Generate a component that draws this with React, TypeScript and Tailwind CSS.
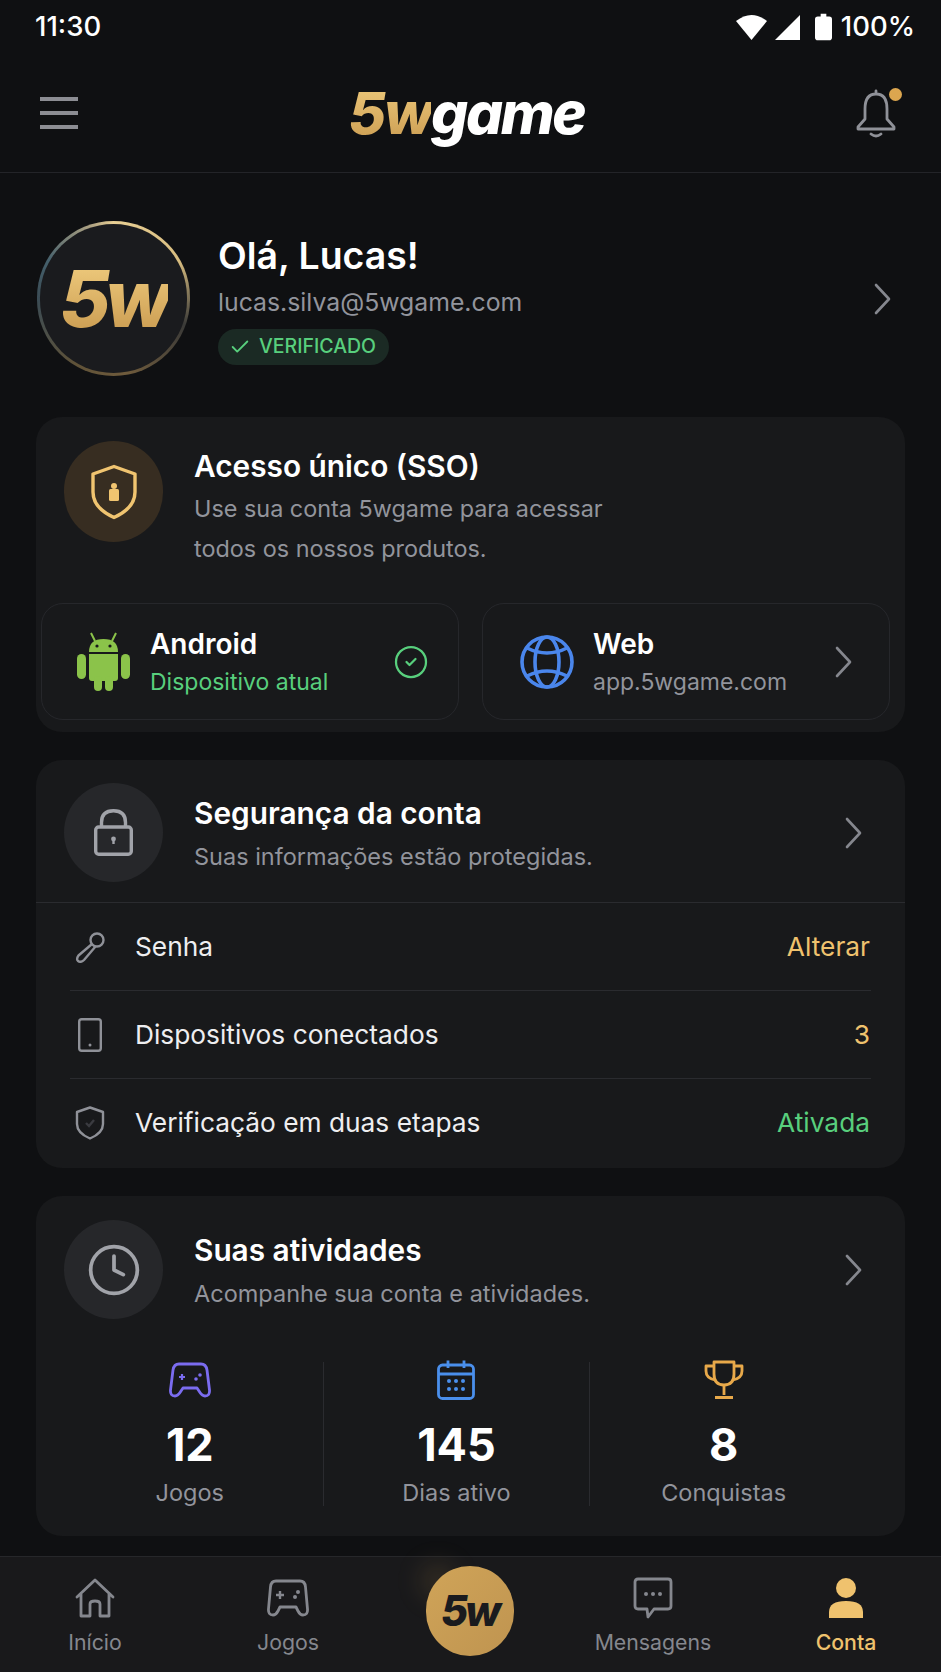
import type { ReactNode } from 'react';
import { Check, CircleCheck, Clock } from 'lucide-react';

const gold = 'bg-linear-to-b from-[#f0cc7e] to-[#c99a4f] bg-clip-text text-transparent';

function Chevron() {
  return (
    <svg viewBox="0 0 17 32" className="h-[32px] w-[17px] shrink-0" fill="none" stroke="#85878e" strokeWidth="2.6" strokeLinecap="round" strokeLinejoin="round">
      <path d="M2 2 L15 16 L2 30" />
    </svg>
  );
}

function SoftIconCircle({ children, warm }: { children: ReactNode; warm?: boolean }) {
  return (
    <div
      className={`flex w-[99px] shrink-0 items-center justify-center rounded-full ${
        warm ? 'h-[101px] bg-[#372d21]' : 'h-[99px] bg-[#26272a]'
      }`}
    >
      {children}
    </div>
  );
}

function CardHeader({ icon, title, sub }: { icon: ReactNode; title: string; sub: string }) {
  return (
    <div className="flex items-center pr-[43px] pl-[28px]">
      <SoftIconCircle>{icon}</SoftIconCircle>
      <div className="ml-[31px] flex-1 pt-[2px]">
        <div className="text-[29.8px] leading-[36px] font-semibold text-white">{title}</div>
        <div className="mt-[10px] text-[23.5px] leading-[32px] text-[#92949c]">{sub}</div>
      </div>
      <Chevron />
    </div>
  );
}

function KeyIcon() {
  return (
    <svg viewBox="0 0 32 32" className="h-[32px] w-[32px]" fill="none" stroke="#8f9198" strokeWidth="2.4" strokeLinejoin="round">
      <circle cx="23" cy="9" r="6.5" />
      <path d="M18 13 L4.5 24.5 Q2 28 4 30 Q7 32 10 29 L21.5 15.5" />
    </svg>
  );
}

function TabletIcon() {
  return (
    <svg viewBox="0 0 24 34" className="h-[34px] w-[24px]" fill="none" stroke="#8f9198" strokeWidth="2.4">
      <rect x="1.2" y="1.2" width="21.6" height="31.6" rx="2.5" />
      <circle cx="12" cy="27" r="1.5" fill="#8f9198" stroke="none" />
    </svg>
  );
}

function ShieldIcon() {
  return (
    <svg viewBox="0 0 30 34" className="h-[34px] w-[30px]" fill="none" stroke="#8f9198" strokeWidth="2.4">
      <path d="M15 1.5 L28 6 V18 Q28 27 15 32.5 Q2 27 2 18 V6 Z" strokeLinejoin="round" />
      <path d="M11 17 L14 20 L19 14" stroke="#3a3b40" />
    </svg>
  );
}

function SecurityRow({ icon, label, value, color, last }: { icon: ReactNode; label: string; value: string; color: string; last?: boolean }) {
  return (
    <div className={`flex h-[88px] items-center ${last ? '' : 'border-b border-[#2a2b2f]'}`}>
      <div className="flex w-[40px] justify-center">{icon}</div>
      <span className="ml-[25px] flex-1 text-[26.3px] text-[#eeeef0]">{label}</span>
      <span className={`mr-[1px] text-[26.3px] ${color}`}>{value}</span>
    </div>
  );
}

function Stat({ icon, value, label, divider }: { icon: ReactNode; value: string; label: string; divider?: boolean }) {
  return (
    <div className={`flex h-[144px] flex-col items-center ${divider ? 'border-r border-[#2a2b2f]' : ''}`}>
      <div className="-mt-[2px] flex h-[40px] shrink-0 items-center">{icon}</div>
      <div className="mt-[18px] shrink-0 text-[45px] leading-[54px] font-bold text-white">{value}</div>
      <div className="mt-[5px] shrink-0 text-[23.5px] leading-[32px] text-[#92949c]">{label}</div>
    </div>
  );
}

function NavItem({ icon, label, width, active }: { icon: ReactNode; label: string; width: string; active?: boolean }) {
  return (
    <div className={`flex flex-col items-center ${width}`}>
      <div className="flex h-[42px] items-center">{icon}</div>
      <span className={`mt-[8px] text-[21.3px] leading-[30px] ${active ? 'font-medium text-[#efc26e]' : 'text-[#85878e]'}`}>{label}</span>
    </div>
  );
}

export default function App() {
  return (
    <div className="flex h-[1672px] w-[941px] flex-col overflow-hidden bg-[#0f1012] font-['Inter',sans-serif]">
      {/* Status bar */}
      <div className="flex h-[54px] shrink-0 items-center justify-between pr-[26px] pl-[35px] text-[27.5px] font-medium text-white">
        <span>11:30</span>
        <div className="flex items-center">
          <svg viewBox="0 0 31 26" className="h-[26px] w-[31px]" fill="white">
            <path d="M0 7 Q15.5 -5 31 7 L15.5 26 Z" />
          </svg>
          <svg viewBox="0 0 26 26" className="ml-[8px] h-[25px] w-[25px]" fill="white">
            <path d="M26 0 V26 H0 Z" />
          </svg>
          <svg viewBox="0 0 18 28" className="ml-[15px] h-[28px] w-[17px]" fill="white">
            <path d="M6 0 H12 V3 H15 Q18 3 18 6 V25 Q18 28 15 28 H3 Q0 28 0 25 V6 Q0 3 3 3 H6 Z" />
          </svg>
          <span className="ml-[9px]">100%</span>
        </div>
      </div>

      {/* Top bar */}
      <div className="flex h-[119px] shrink-0 items-center justify-between border-b border-[#232428] pr-[42px] pl-[40px]">
        <div className="flex w-[38px] flex-col gap-[10px]">
          <div className="h-[4px] bg-[#8c8d93]" />
          <div className="h-[4px] bg-[#8c8d93]" />
          <div className="h-[4px] bg-[#8c8d93]" />
        </div>
        <div className="text-[58px] leading-[70px] font-extrabold tracking-[-2.2px] italic">
          <span className={gold}>5w</span>
          <span className="text-white">game</span>
        </div>
        <div className="relative h-[50px] w-[44px]">
          <svg viewBox="0 0 44 50" className="h-[50px] w-[44px]" fill="none" stroke="#8f9198" strokeWidth="2.8" strokeLinejoin="round" strokeLinecap="round">
            <path d="M21 3 V6 M21 6 C12 6 10 14 10 21 V31 L3 39 V41 H39 V39 L32 31 V21 C32 14 30 6 21 6 Z" />
            <path d="M16 46 Q21 50 26 46" />
          </svg>
          <div className="absolute top-[0px] right-[-3px] h-[13px] w-[13px] rounded-full bg-[#dca64f]" />
        </div>
      </div>

      {/* Profile */}
      <div className="flex shrink-0 items-center pt-[48px] pr-[50px] pb-[41px] pl-[37px]">
        <div className="h-[155px] w-[153px] shrink-0 rounded-full bg-[conic-gradient(from_0deg,#e8cf94_0deg,#d8bd80_60deg,#3a3a38_110deg,#6f5b3c_170deg,#5f5238_210deg,#3b4c55_270deg,#45606c_300deg,#b4a684_345deg,#e8cf94_360deg)] p-[3px]">
          <div className="flex h-full w-full items-center justify-center rounded-full bg-[#1a1b1e]">
            <span className={`text-[78px] leading-none font-extrabold tracking-[-5px] italic ${gold}`}>5w</span>
          </div>
        </div>
        <div className="ml-[28px] flex-1 self-start pt-[13px]">
          <div className="text-[37.4px] leading-[44px] font-semibold text-white">Olá, Lucas!</div>
          <div className="mt-[7px] text-[24.8px] leading-[34px] text-[#92949c]">lucas.silva@5wgame.com</div>
          <div className="mt-[10px] flex h-[36px] w-[171px] items-center gap-[8px] rounded-full bg-[#1b2a24] pl-[11px] text-[19.5px] font-medium text-[#58cf7d]">
            <Check className="h-[22px] w-[22px]" strokeWidth={2} />
            VERIFICADO
          </div>
        </div>
        <Chevron />
      </div>

      <div className="flex flex-col gap-[28px] px-[36px]">
        {/* SSO */}
        <div className="h-[315px] rounded-[26px] bg-[#18191b] pt-[24px]">
          <div className="flex pl-[28px]">
            <SoftIconCircle warm>
              <svg viewBox="0 0 48 56" className="h-[56px] w-[48px]" fill="none" stroke="#f0c470" strokeWidth="3.4" strokeLinejoin="round">
                <path d="M24 2.5 L45 10 V28 Q45 44 24 53.5 Q3 44 3 28 V10 Z" />
                <circle cx="24" cy="22" r="3" fill="#f0c470" stroke="none" />
                <rect x="19" y="25" width="10" height="12" rx="1.5" fill="#f0c470" stroke="none" />
              </svg>
            </SoftIconCircle>
            <div className="ml-[31px] pt-[7px]">
              <div className="text-[29.8px] leading-[36px] font-semibold text-white">Acesso único (SSO)</div>
              <div className="mt-[5px] text-[23.4px] leading-[40px] text-[#92949c]">
                Use sua conta 5wgame para acessar
                <br />
                todos os nossos produtos.
              </div>
            </div>
          </div>
          <div className="mt-[34px] flex gap-[23px] pr-[15px] pl-[5px]">
            <div className="flex h-[117px] w-[418px] items-center rounded-[22px] border border-[#26272b] pr-[29px] pl-[35px]">
              <svg viewBox="0 0 53 59" className="h-[59px] w-[53px] shrink-0" fill="#8bc34a">
                <path d="M14 1 L18 9 M39 1 L35 9" stroke="#8bc34a" strokeWidth="2" />
                <path d="M12 20 Q12 7 26.5 7 Q41 7 41 20 Z" />
                <rect x="0" y="22" width="9" height="25" rx="4.5" />
                <rect x="44" y="22" width="9" height="25" rx="4.5" />
                <path d="M12 22 H41 V46 Q41 49 38 49 H15 Q12 49 12 46 Z" />
                <rect x="17" y="44" width="8" height="15" rx="4" />
                <rect x="28" y="44" width="8" height="15" rx="4" />
                <circle cx="20" cy="14" r="1.6" fill="#18191b" />
                <circle cx="33" cy="14" r="1.6" fill="#18191b" />
              </svg>
              <div className="ml-[20px] flex-1">
                <div className="text-[28px] leading-[36px] font-semibold text-white">Android</div>
                <div className="mt-[4px] text-[23px] leading-[32px] text-[#58cf7d]">Dispositivo atual</div>
              </div>
              <CircleCheck className="h-[36px] w-[36px] text-[#58cf7d]" strokeWidth={1.5} />
            </div>
            <div className="flex h-[117px] flex-1 items-center rounded-[22px] border border-[#26272b] pr-[37px] pl-[37px]">
              <svg viewBox="0 0 54 54" className="h-[54px] w-[54px] shrink-0" fill="none" stroke="#4a86ec" strokeWidth="3.6">
                <circle cx="27" cy="27" r="25" />
                <ellipse cx="27" cy="27" rx="12" ry="25" />
                <path d="M7 13 Q27 23 47 13 M7 41 Q27 31 47 41" />
              </svg>
              <div className="ml-[19px] flex-1">
                <div className="text-[28px] leading-[36px] font-semibold text-white">Web</div>
                <div className="mt-[4px] text-[23px] leading-[32px] text-[#92949c]">app.5wgame.com</div>
              </div>
              <Chevron />
            </div>
          </div>
        </div>

        {/* Account security */}
        <div className="h-[408px] rounded-[26px] bg-[#18191b] pt-[23px]">
          <CardHeader
            icon={
              <svg viewBox="0 0 39 47" className="h-[47px] w-[39px]" fill="none" stroke="#a1a3a9" strokeWidth="3.4">
                <rect x="1.7" y="18" width="35.6" height="27.3" rx="3" />
                <path d="M7.5 18 V13.5 C7.5 5.5 12 1.7 19.5 1.7 C27 1.7 31.5 5.5 31.5 13.5 V18" />
                <circle cx="19.5" cy="30" r="2.4" fill="#a1a3a9" stroke="none" />
                <path d="M19.5 30 V35" strokeWidth="2.4" />
              </svg>
            }
            title="Segurança da conta"
            sub="Suas informações estão protegidas."
          />
          <div className="mt-[20px] border-t border-[#2a2b2f] pr-[34px] pl-[34px]">
            <SecurityRow icon={<KeyIcon />} label="Senha" value="Alterar" color="text-[#efc26e]" />
            <SecurityRow icon={<TabletIcon />} label="Dispositivos conectados" value="3" color="text-[#efc26e]" />
            <SecurityRow icon={<ShieldIcon />} label="Verificação em duas etapas" value="Ativada" color="text-[#58cf7d]" last />
          </div>
        </div>

        {/* Activity */}
        <div className="h-[340px] rounded-[26px] bg-[#18191b] pt-[24px]">
          <CardHeader
            icon={<Clock className="h-[56px] w-[56px] text-[#a1a3a9]" strokeWidth={1.6} />}
            title="Suas atividades"
            sub="Acompanhe sua conta e atividades."
          />
          <div className="mt-[43px] ml-[21px] grid w-[800px] grid-cols-3">
            <Stat
              divider
              value="12"
              label="Jogos"
              icon={
                <svg viewBox="0 0 42 36" className="h-[36px] w-[42px]" fill="none" stroke="#7b6cf0" strokeWidth="2.8" strokeLinejoin="round">
                  <path d="M10 2 H32 Q37 2 38 8 L40.5 28 Q41 34 36 34 Q33 34 30 29 L28 26 H14 L12 29 Q9 34 6 34 Q1 34 1.5 28 L4 8 Q5 2 10 2 Z" />
                  <path d="M13 12 V18 M10 15 H16" strokeWidth="2.2" />
                  <circle cx="27" cy="17" r="1.8" fill="#7b6cf0" stroke="none" />
                  <circle cx="31" cy="13" r="1.8" fill="#7b6cf0" stroke="none" />
                </svg>
              }
            />
            <Stat
              divider
              value="145"
              label="Dias ativo"
              icon={
                <svg viewBox="0 0 38 40" className="h-[40px] w-[38px]" fill="none" stroke="#4a8fec" strokeWidth="2.8">
                  <rect x="1.5" y="5" width="35" height="33.5" rx="4" />
                  <path d="M1.5 14 H36.5 M11 0.5 V8 M27 0.5 V8" />
                  <g fill="#4a8fec" stroke="none">
                    <circle cx="12" cy="21" r="2" />
                    <circle cx="19" cy="21" r="2" />
                    <circle cx="26" cy="21" r="2" />
                    <circle cx="12" cy="29" r="2" />
                    <circle cx="19" cy="29" r="2" />
                    <circle cx="26" cy="29" r="2" />
                  </g>
                </svg>
              }
            />
            <Stat
              value="8"
              label="Conquistas"
              icon={
                <svg viewBox="0 0 40 40" className="h-[40px] w-[40px]" fill="none" stroke="#e8a94a" strokeWidth="2.8" strokeLinejoin="round">
                  <path d="M10 2 H30 V14 Q30 25 20 25 Q10 25 10 14 Z" />
                  <path d="M10 6 H2 V11 Q2 18 11 20 M30 6 H38 V11 Q38 18 29 20" />
                  <path d="M20 25 V35 M11 37.5 H29" />
                </svg>
              }
            />
          </div>
        </div>
      </div>

      {/* Bottom nav */}
      <div className="relative mt-auto flex h-[116px] shrink-0 items-start border-t border-[#26272a] bg-[#19191b] pt-[20px]">
        <NavItem
          width="w-[190px]"
          label="Início"
          icon={
            <svg viewBox="0 0 40 40" className="h-[40px] w-[40px]" fill="none" stroke="#85878e" strokeWidth="2.8" strokeLinejoin="round" strokeLinecap="round">
              <path d="M2 19 L20 2 L38 19 M6 16 V38 H15 V26 Q15 23 20 23 Q25 23 25 26 V38 H34 V16" />
            </svg>
          }
        />
        <NavItem
          width="w-[196px]"
          label="Jogos"
          icon={
            <svg viewBox="0 0 42 38" className="h-[38px] w-[42px]" fill="none" stroke="#85878e" strokeWidth="2.8" strokeLinejoin="round">
              <path d="M9 2 H33 Q38 2 38.5 8 L40.5 30 Q41 36 36 36 Q33 36 31 32 L29 28 H13 L11 32 Q9 36 6 36 Q1 36 1.5 30 L3.5 8 Q4 2 9 2 Z" />
              <path d="M13 12 V20 M9 16 H17" strokeWidth="2.4" />
              <circle cx="28" cy="18" r="2" fill="#85878e" stroke="none" />
              <circle cx="31" cy="13" r="2" fill="#85878e" stroke="none" />
            </svg>
          }
        />
        <div className="relative flex w-[169px] justify-center">
          <div className="absolute top-[-14px] left-[34px] h-[36px] w-[36px] rounded-full bg-[#c89d53]/15 blur-md" />
          <div className="relative -mt-[11px] -ml-[2px] flex h-[90px] w-[88px] items-center justify-center rounded-full bg-linear-to-br from-[#d0a458] to-[#bf9450]">
            <span className="text-[42px] leading-none font-extrabold tracking-[-3px] text-[#1a1b1e] italic">5w</span>
          </div>
        </div>
        <NavItem
          width="w-[196px]"
          label="Mensagens"
          icon={
            <svg viewBox="0 0 40 42" className="h-[42px] w-[40px]" fill="none" stroke="#85878e" strokeWidth="2.8" strokeLinejoin="round">
              <path d="M5 2 H35 Q38 2 38 5 V29 Q38 32 35 32 H21 L15 40 L14 32 H5 Q2 32 2 29 V5 Q2 2 5 2 Z" />
              <g fill="#85878e" stroke="none">
                <circle cx="13" cy="17" r="2" />
                <circle cx="20" cy="17" r="2" />
                <circle cx="27" cy="17" r="2" />
              </g>
            </svg>
          }
        />
        <NavItem
          width="w-[190px]"
          active
          label="Conta"
          icon={
            <svg viewBox="0 0 34 40" className="h-[40px] w-[34px]" fill="#efc26e">
              <ellipse cx="17" cy="10" rx="10" ry="10" />
              <path d="M0 40 V34 Q0 23 17 23 Q34 23 34 34 V40 Z" />
            </svg>
          }
        />
      </div>
    </div>
  );
}
